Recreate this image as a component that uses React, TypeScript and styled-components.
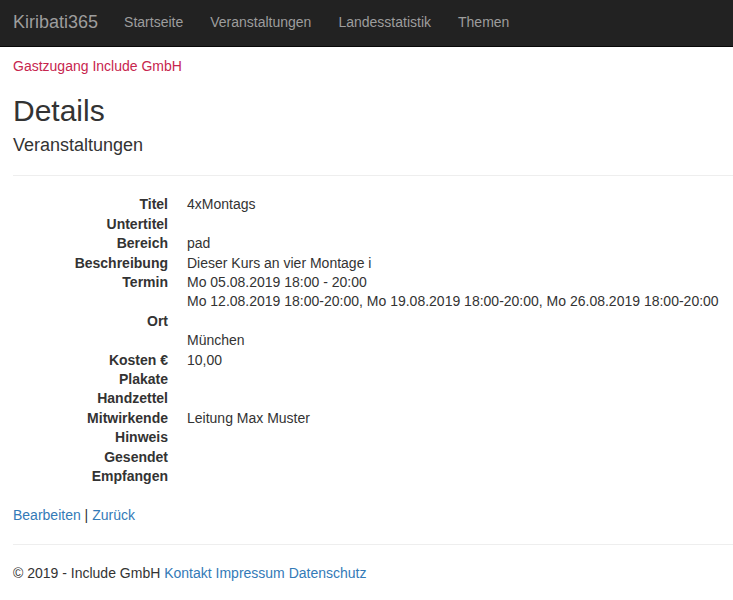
import React from 'react';
import styled, { createGlobalStyle } from 'styled-components';

const Global = createGlobalStyle`
  body {
    margin: 0;
    font-family: "Liberation Sans", Arial, sans-serif;
    font-size: 14px;
    line-height: 19.4px;
    color: #333;
    background: #fff;
  }
`;

const Nav = styled.nav`
  height: 46px;
  background: #222;
  border-bottom: 1px solid #080808;
  display: flex;
  align-items: center;
  padding: 0 13px;
`;

const Brand = styled.span`
  font-size: 18px;
  color: #9d9d9d;
  margin-right: 26px;
`;

const NavLink = styled.a`
  color: #9d9d9d;
  font-size: 14px;
  text-decoration: none;
  margin-right: 27px;
`;

const Container = styled.div`
  padding: 0 13px;
`;

const Guest = styled.div`
  color: #c7254e;
  margin-top: 10px;
`;

const Title = styled.h2`
  font-size: 30px;
  font-weight: 500;
  margin: 17px 0 0;
  line-height: 36px;
`;

const Sub = styled.h4`
  font-size: 18px;
  font-weight: 500;
  margin: 5px 0 0;
  line-height: 22px;
`;

const Rule = styled.hr<{ $top: number }>`
  border: 0;
  border-top: 1px solid #eee;
  margin: ${p => p.$top}px -13px 19px 0;
`;

const Dl = styled.dl`
  display: grid;
  grid-template-columns: 155px 1fr;
  column-gap: 19px;
  margin: 0 0 19px;
`;

const Dt = styled.dt`
  font-weight: bold;
  text-align: right;
  grid-column: 1;
`;

const Dd = styled.dd`
  margin: 0;
  grid-column: 2;
  white-space: nowrap;
`;

const Link = styled.a`
  color: #337ab7;
  text-decoration: none;
`;

const Footer = styled.footer`
  padding-bottom: 20px;
`;

const rows: [string, React.ReactNode][] = [
  ['Titel', '4xMontags'],
  ['Untertitel', ''],
  ['Bereich', 'pad'],
  ['Beschreibung', 'Dieser Kurs an vier Montage i'],
  ['Termin', <>Mo 05.08.2019 18:00 - 20:00<br />Mo 12.08.2019 18:00-20:00, Mo 19.08.2019 18:00-20:00, Mo 26.08.2019 18:00-20:00</>],
  ['Ort', <><br />München</>],
  ['Kosten €', '10,00'],
  ['Plakate', ''],
  ['Handzettel', ''],
  ['Mitwirkende', 'Leitung Max Muster'],
  ['Hinweis', ''],
  ['Gesendet', ''],
  ['Empfangen', ''],
];

export default function App() {
  return (
    <>
      <Global />
      <Nav>
        <Brand>Kiribati365</Brand>
        <NavLink>Startseite</NavLink>
        <NavLink>Veranstaltungen</NavLink>
        <NavLink>Landesstatistik</NavLink>
        <NavLink>Themen</NavLink>
      </Nav>
      <Container>
        <Guest>Gastzugang Include GmbH</Guest>
        <Title>Details</Title>
        <Sub>Veranstaltungen</Sub>
        <Rule $top={19} />
        <Dl>
          {rows.map(([k, v]) => (
            <React.Fragment key={k}>
              <Dt>{k}</Dt>
              <Dd>{v || '\u00a0'}</Dd>
            </React.Fragment>
          ))}
        </Dl>
        <div>
          <Link>Bearbeiten</Link> | <Link>Zurück</Link>
        </div>
        <Rule $top={19} />
        <Footer>
          © 2019 - Include GmbH <Link>Kontakt</Link> <Link>Impressum</Link> <Link>Datenschutz</Link>
        </Footer>
      </Container>
    </>
  );
}
